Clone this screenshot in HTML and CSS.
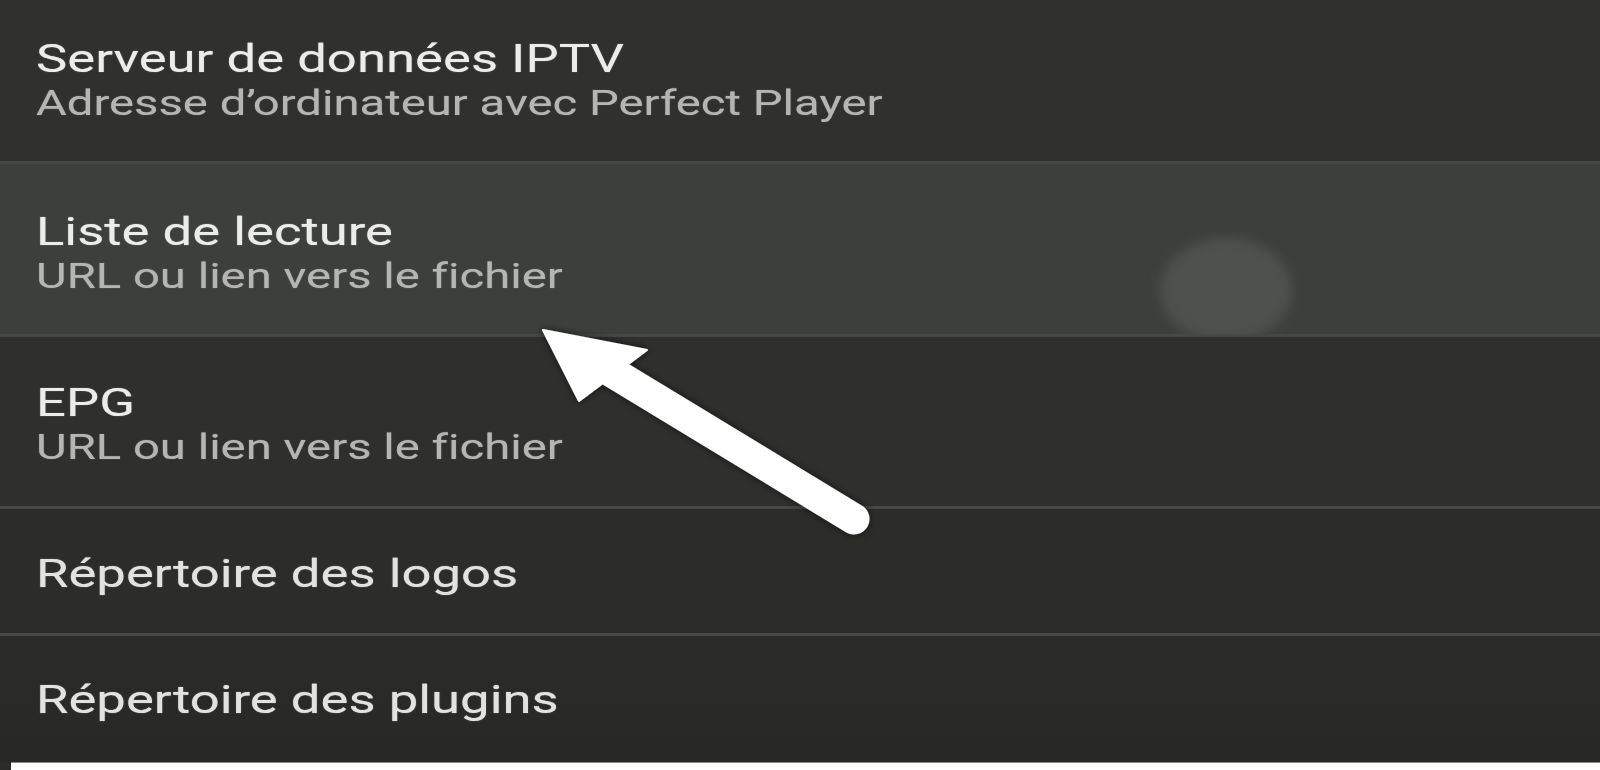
FILE: index.html
```html
<!DOCTYPE html>
<html lang="fr">
<head>
<meta charset="utf-8">
<title>Paramètres</title>
<link rel="stylesheet" href="styles.css">
</head>
<body>
<div class="screen">
  <ul class="prefs">
    <li class="pref pref-1">
      <div class="title">Serveur de données IPTV</div>
      <div class="summary">Adresse d’ordinateur avec Perfect Player</div>
    </li>
    <li class="pref pref-2 pressed">
      <div class="title">Liste de lecture</div>
      <div class="summary">URL ou lien vers le fichier</div>
      <span class="ripple"></span>
    </li>
    <li class="pref pref-3">
      <div class="title">EPG</div>
      <div class="summary">URL ou lien vers le fichier</div>
    </li>
    <li class="pref pref-4">
      <div class="title">Répertoire des logos</div>
    </li>
    <li class="pref pref-5">
      <div class="title">Répertoire des plugins</div>
    </li>
  </ul>
  <div class="bottom-strip">
    <span class="strip-dark"></span>
    <span class="strip-light"></span>
  </div>
  <svg class="arrow" width="1600" height="770" viewBox="0 0 1600 770" aria-hidden="true">
    <defs>
      <filter id="sh" x="-20%" y="-20%" width="140%" height="140%">
        <feDropShadow dx="0" dy="0" stdDeviation="4" flood-color="#000" flood-opacity="0.6"/>
      </filter>
    </defs>
    <g filter="url(#sh)" fill="#ffffff" stroke="#ffffff">
      <line x1="612" y1="372" x2="854" y2="519" stroke-width="31" stroke-linecap="round"/>
      <polygon points="543,330 647,350 579,401" stroke-width="2" stroke-linejoin="round"/>
    </g>
  </svg>
</div>
</body>
</html>
```
FILE: styles.css
```css
html, body {
  margin: 0;
  padding: 0;
  background: #2a2b29;
}

.screen {
  position: relative;
  width: 1600px;
  height: 770px;
  overflow: hidden;
  font-family: Roboto, "Liberation Sans", sans-serif;
  font-variant-ligatures: none;
}

.prefs {
  list-style: none;
  margin: 0;
  padding: 0;
  display: flex;
  flex-direction: column;
}

.pref {
  position: relative;
  box-sizing: border-box;
  padding-left: 36px;
  border-bottom: 3px solid #464845;
  overflow: hidden;
}

.pref-1 { height: 164px; padding-top: 37px; background: #30312f; }
.pref-2 { height: 173px; padding-top: 46px; background: #3d3f3c; }
.pref-3 { height: 172px; padding-top: 44px; background: #2f302e; }
.pref-4 { height: 127px; padding-top: 43px; background: #2c2d2b; }
.pref-5 { height: 126px; padding-top: 42px; background: linear-gradient(#2b2c2a, #282927); border-bottom: 0; }

.title {
  font-size: 39px;
  line-height: 44px;
  color: #ececec;
  white-space: nowrap;
  transform: scaleX(1.35);
  transform-origin: left center;
  text-shadow: 0 0 1px rgba(236, 236, 236, 0.6);
}

.summary {
  font-size: 35px;
  line-height: 46px;
  color: #b5b6b4;
  white-space: nowrap;
  transform: scaleX(1.35);
  transform-origin: left center;
  text-shadow: 0 0 1px rgba(181, 182, 180, 0.6);
}

.pref-4 .title,
.pref-5 .title {
  color: #e2e2e2;
}

.ripple {
  position: absolute;
  left: 1160px;
  top: 74px;
  width: 132px;
  height: 104px;
  border-radius: 50%;
  background: #4f514e;
  filter: blur(6px);
}

.bottom-strip {
  display: flex;
  height: 8px;
}

.strip-dark {
  width: 11px;
  background: #2a2b29;
}

.strip-light {
  flex: 1;
  background: #ffffff;
  border-top: 1px solid #8a8a8a;
}

.arrow {
  position: absolute;
  left: 0;
  top: 0;
  pointer-events: none;
}
```
